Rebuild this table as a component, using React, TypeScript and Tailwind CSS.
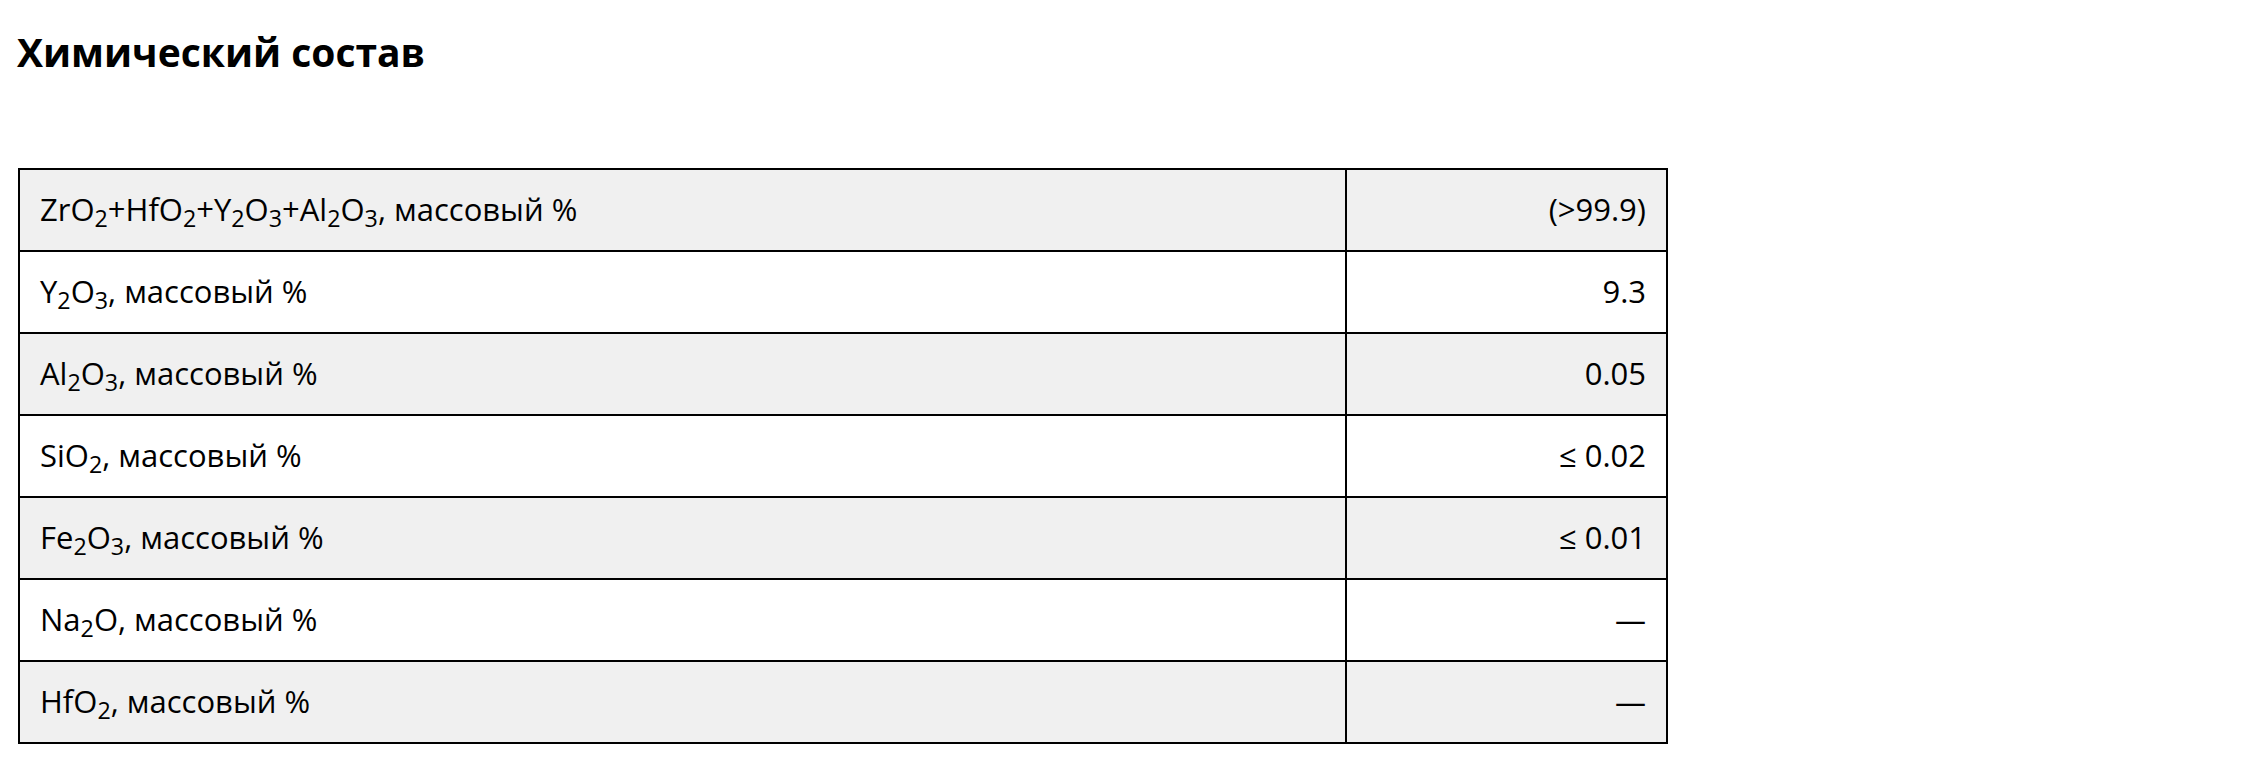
import React from "react";

const rows: { label: React.ReactNode; value: string }[] = [
  {
    label: (
      <>
        ZrO<sub>2</sub>+HfO<sub>2</sub>+Y<sub>2</sub>O<sub>3</sub>+Al<sub>2</sub>O<sub>3</sub>, массовый %
      </>
    ),
    value: "(>99.9)",
  },
  { label: (<>Y<sub>2</sub>O<sub>3</sub>, массовый %</>), value: "9.3" },
  { label: (<>Al<sub>2</sub>O<sub>3</sub>, массовый %</>), value: "0.05" },
  { label: (<>SiO<sub>2</sub>, массовый %</>), value: "≤ 0.02" },
  { label: (<>Fe<sub>2</sub>O<sub>3</sub>, массовый %</>), value: "≤ 0.01" },
  { label: (<>Na<sub>2</sub>O, массовый %</>), value: "—" },
  { label: (<>HfO<sub>2</sub>, массовый %</>), value: "—" },
];

export default function App() {
  return (
    <div
      className="min-h-[778px] w-full bg-white px-[17px] pt-[25px] text-black"
      style={{ fontFamily: '"Open Sans", "Noto Sans", sans-serif' }}
    >
      <h2 className="m-0 text-[39px] font-bold leading-[54px]">Химический состав</h2>
      <table className="mt-[89px] ml-[1px] w-[1650px] border-collapse border-2 border-black text-[31px]">
        <tbody>
          {rows.map((r, i) => (
            <tr key={i} className={i % 2 === 0 ? "bg-[#f0f0f0]" : "bg-white"}>
              <td className="h-[82px] w-[1327px] border-2 border-black px-[20px] pt-0 pb-[2px] text-left align-middle leading-[42px]">
                {r.label}
              </td>
              <td className="h-[82px] border-2 border-black px-[20px] pt-0 pb-[2px] text-right align-middle leading-[42px]">
                {r.value}
              </td>
            </tr>
          ))}
        </tbody>
      </table>
    </div>
  );
}
